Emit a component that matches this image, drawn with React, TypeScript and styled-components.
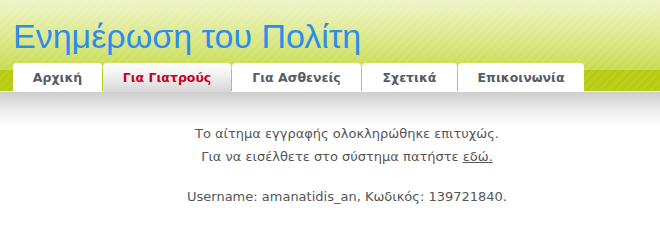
import React from 'react'
import styled, { createGlobalStyle } from 'styled-components'

const GlobalStyle = createGlobalStyle`
	html, body {
		margin: 0;
		padding: 0;
		background: #FFFFFF;
	}
	body {
		font-family: 'DejaVu Sans', Verdana, sans-serif;
	}
`

const Header = styled.header`
	height: 92px;
	display: flex;
	flex-direction: column;
	justify-content: space-between;
	background:
		repeating-linear-gradient(135deg, rgba(255, 255, 255, 0.07) 0 3px, rgba(255, 255, 255, 0) 3px 6px),
		linear-gradient(to bottom, #EEF4C6 0px, #DCE98E 35px, #C8DB4E 70px, #B5CB0E 70px, #B5CB0E 91px, #FFFFFF 91px, #FFFFFF 92px);
`
const Title = styled.h1`
	margin: 0;
	padding: 15px 0 0 13px;
	font-family: 'Liberation Sans', Arial, sans-serif;
	font-weight: 400;
	font-size: 34px;
	line-height: 42px;
	color: #2D8CEE;
`
const TabBar = styled.nav`
	display: flex;
	gap: 1px;
	padding-left: 13px;
`
const Tab = styled.a<{ $active?: boolean; $width: number }>`
	width: ${({ $width }) => $width}px;
	height: 29px;
	display: flex;
	align-items: center;
	justify-content: center;
	border-radius: 4px 4px 0 0;
	background: ${({ $active }) => $active
		? 'linear-gradient(to bottom, #FFFFFF 0%, #F2F2F2 40%, #D6D6D6 100%)'
		: '#FFFFFF'};
	color: ${({ $active }) => $active ? '#C8001E' : '#565B66'};
	font-family: 'DejaVu Sans', Verdana, sans-serif;
	font-weight: 700;
	font-size: 12.5px;
	text-decoration: none;
`
const Content = styled.main`
	min-height: 118px;
	padding: 30px 0 0 34px;
	background: linear-gradient(to bottom, #CDCDCD 0px, #EDEDED 18px, #FFFFFF 34px);
	text-align: center;
	color: #555555;
	font-family: 'DejaVu Sans', Verdana, sans-serif;
	font-size: 13px;
	line-height: 23px;
`
const Message = styled.p`
	margin: 0 0 17px;
`
const Link = styled.a`
	color: #555555;
	text-decoration: underline;
`

const tabs = [
	{ label: 'Αρχική', width: 89 },
	{ label: 'Για Γιατρούς', width: 128, active: true },
	{ label: 'Για Ασθενείς', width: 129 },
	{ label: 'Σχετικά', width: 95 },
	{ label: 'Επικοινωνία', width: 126 },
]

const App = () => {
	return (
		<>
			<GlobalStyle />
			<Header>
				<Title>Ενημέρωση του Πολίτη</Title>
				<TabBar>
					{tabs.map((t) => (
						<Tab key={t.label} href='#' $width={t.width} $active={t.active}>{t.label}</Tab>
					))}
				</TabBar>
			</Header>
			<Content>
				<Message>
					Το αίτημα εγγραφής ολοκληρώθηκε επιτυχώς.<br />
					Για να εισέλθετε στο σύστημα πατήστε <Link href='#'>εδώ.</Link>
				</Message>
				<Message>Username: amanatidis_an, Κωδικός: 139721840.</Message>
			</Content>
		</>
	)
}

export default App
